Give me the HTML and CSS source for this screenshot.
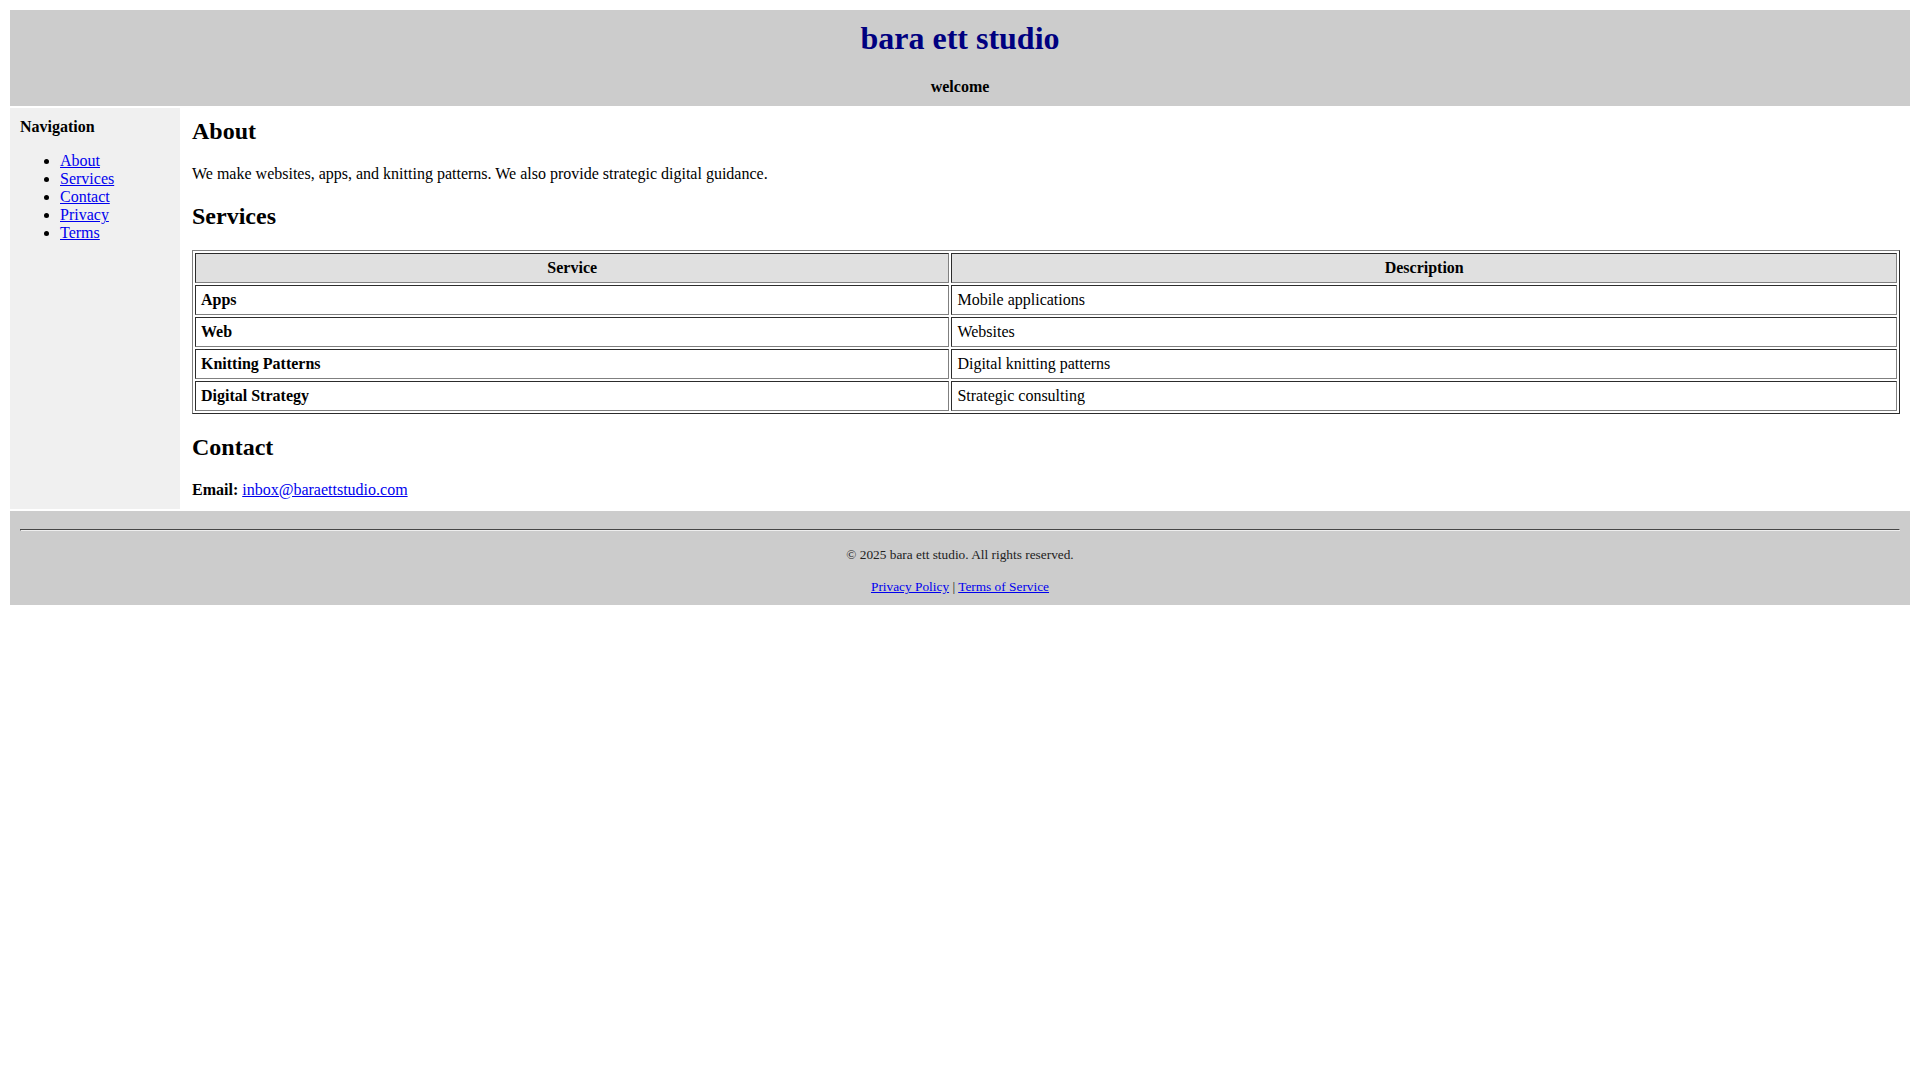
FILE: index.html
```html
<!DOCTYPE html>
<html lang="en">
<head>
<meta charset="utf-8">
<title>bara ett studio</title>
<link rel="stylesheet" href="styles.css">
</head>
<body>
<div class="layout">
  <header class="site-header">
    <h1 class="site-title">bara ett studio</h1>
    <p class="tagline"><strong>welcome</strong></p>
  </header>
  <nav class="sidebar">
    <p class="nav-title"><strong>Navigation</strong></p>
    <ul class="nav-list">
      <li><a href="#about">About</a></li>
      <li><a href="#services">Services</a></li>
      <li><a href="#contact">Contact</a></li>
      <li><a href="#privacy">Privacy</a></li>
      <li><a href="#terms">Terms</a></li>
    </ul>
  </nav>
  <main class="content">
    <h2 id="about">About</h2>
    <p>We make websites, apps, and knitting patterns. We also provide strategic digital guidance.</p>
    <h2 id="services">Services</h2>
    <table class="services">
      <thead>
        <tr><th>Service</th><th>Description</th></tr>
      </thead>
      <tbody>
        <tr><td><strong>Apps</strong></td><td>Mobile applications</td></tr>
        <tr><td><strong>Web</strong></td><td>Websites</td></tr>
        <tr><td><strong>Knitting Patterns</strong></td><td>Digital knitting patterns</td></tr>
        <tr><td><strong>Digital Strategy</strong></td><td>Strategic consulting</td></tr>
      </tbody>
    </table>
    <h2 id="contact">Contact</h2>
    <p><strong>Email:</strong> <a href="mailto:inbox@baraettstudio.com">inbox@baraettstudio.com</a></p>
  </main>
  <footer class="site-footer">
    <hr class="footer-rule">
    <p class="footer-text">&copy; 2025 bara ett studio. All rights reserved.</p>
    <p class="footer-text"><a href="#privacy">Privacy Policy</a> | <a href="#terms">Terms of Service</a></p>
  </footer>
</div>
</body>
</html>
```

FILE: styles.css
```css
html, body {
  background: #ffffff;
}

body {
  margin: 8px;
  font-family: "Liberation Serif", "Times New Roman", serif;
  font-size: 16px;
  color: #000000;
}

a {
  color: #0000ee;
}

.layout {
  display: grid;
  grid-template-columns: 170px 1fr;
  gap: 2px;
  padding: 2px;
}

.site-header {
  grid-column: 1 / 3;
  background: #cccccc;
  padding: 10px;
  text-align: center;
}

.site-title {
  margin: 0 0 0.67em;
  font-size: 32px;
  color: #000080;
}

.tagline {
  margin: 0;
}

.sidebar {
  background: #f0f0f0;
  padding: 10px;
}

.nav-title {
  margin: 0 0 16px;
}

.nav-list {
  margin: 16px 0 0;
  padding-left: 40px;
}

.content {
  background: #ffffff;
  padding: 10px;
}

.content > :first-child {
  margin-top: 0;
}

.content > :last-child {
  margin-bottom: 0;
}

.content h2 {
  font-size: 24px;
  margin: 0.83em 0;
}

.services {
  width: 100%;
  border: 1px outset gray;
  border-spacing: 2px;
}

.services th,
.services td {
  border: 1px inset gray;
  padding: 5px;
  text-align: left;
}

.services th {
  background: #e0e0e0;
  text-align: center;
}

.site-footer {
  grid-column: 1 / 3;
  background: #cccccc;
  padding: 10px;
  text-align: center;
}

.footer-rule {
  margin: 8px 0 16px;
  border: 1px inset;
  border-color: #9a9a9a #eeeeee #eeeeee #9a9a9a;
  height: 0;
}

.footer-text {
  font-size: 13.33px;
  margin: 16px 0;
  color: #222222;
}

.footer-text:last-child {
  margin-bottom: 0;
}
```
